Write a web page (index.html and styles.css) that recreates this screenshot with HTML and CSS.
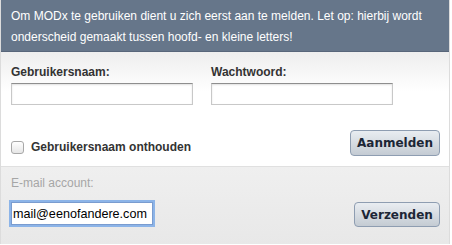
FILE: index.html
```html
<!DOCTYPE html>
<html lang="nl">
<head>
    <meta charset="utf-8" />
    <title>MODx aanmelden</title>
    <link rel="stylesheet" href="styles.css">
</head>
<body>
    <div class="login">
        <div class="intro">Om MODx te gebruiken dient u zich eerst aan te melden. Let op: hierbij wordt onderscheid gemaakt tussen hoofd- en kleine letters!</div>
        <form class="login-form" onsubmit="return false;">
            <div class="fields">
                <div class="field">
                    <label for="username">Gebruikersnaam:</label>
                    <input type="text" id="username" />
                </div>
                <div class="field">
                    <label for="password">Wachtwoord:</label>
                    <input type="password" id="password" />
                </div>
            </div>
            <div class="actions">
                <label class="remember"><span class="check"></span>Gebruikersnaam onthouden</label>
                <button type="submit">Aanmelden</button>
            </div>
        </form>
        <form class="forgot" onsubmit="return false;">
            <label for="email">E-mail account:</label>
            <div class="actions">
                <input type="email" id="email" class="focused" value="mail@eenofandere.com" />
                <button type="submit" class="send">Verzenden</button>
            </div>
        </form>
    </div>
</body>
</html>
```

FILE: styles.css
```css
body {
    margin: 0;
    background: #ffffff;
    font-family: "Liberation Sans", Arial, sans-serif;
    font-size: 12px;
}
.login {
    width: 450px;
    box-sizing: border-box;
    border-left: 1px solid #dcdcdc;
    border-right: 1px solid #dcdcdc;
}
.intro {
    background: #66768a;
    color: #ffffff;
    line-height: 21px;
    padding: 6px 10px 3px 10px;
    border-bottom: 1px solid #58667a;
}
.login-form {
    background: linear-gradient(#eeeeee, #ffffff 40px);
    padding: 13px 9px 10px 10px;
    border-bottom: 1px solid #e0e0e0;
}
.fields {
    display: flex;
    gap: 18px;
}
.field {
    display: flex;
    flex-direction: column;
}
.field label {
    font-weight: bold;
    color: #333333;
    line-height: 15px;
    margin-bottom: 3px;
}
.field input {
    width: 182px;
    height: 22px;
    box-sizing: border-box;
    border: 1px solid #c8c8c8;
    border-top-color: #8e8e8e;
    box-shadow: inset 0 1px 2px #e0e0e0;
    margin: 0;
}
.actions {
    display: flex;
    justify-content: space-between;
    align-items: center;
    margin-top: 25px;
}
.remember {
    display: flex;
    align-items: center;
    font-weight: bold;
    color: #333333;
    margin-top: 8px;
}
.check {
    width: 11px;
    height: 11px;
    border: 1px solid #a8a8a8;
    border-radius: 3px;
    background: linear-gradient(#ffffff, #e6e6e6);
    margin-right: 7px;
}
button {
    height: 26px;
    padding: 0 6px;
    font-family: "DejaVu Sans", Verdana, sans-serif;
    font-size: 12px;
    font-weight: bold;
    color: #1c2636;
    background: linear-gradient(#e9edf1, #c4cbd3);
    border: 1px solid #8e9db1;
    border-radius: 4px;
}
.forgot {
    background: linear-gradient(#efefef, #e8e8e8);
    padding: 9px 9px 17px 10px;
}
.forgot label {
    display: block;
    color: #a6a6a6;
    line-height: 15px;
}
.forgot .actions {
    align-items: flex-start;
    margin-top: 11px;
}
.forgot input {
    width: 142px;
    height: 23px;
    box-sizing: border-box;
    margin: 0;
    padding: 0 1px;
    font-family: "Liberation Sans", Arial, sans-serif;
    font-size: 12.6px;
    color: #000000;
    border: 1px solid #7a9ccf;
}
.focused {
    box-shadow: 0 0 0 2px #8cb4e8;
    outline: none;
}
.send {
    height: 25px;
    width: 86px;
}
```
